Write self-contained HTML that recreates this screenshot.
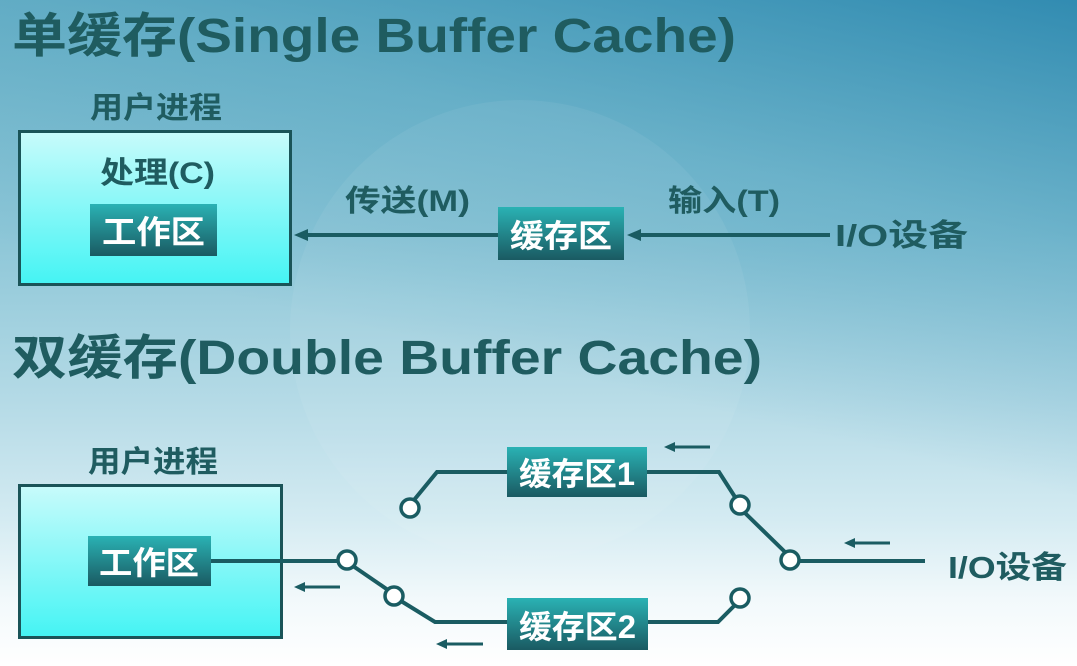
<!DOCTYPE html>
<html><head><meta charset="utf-8"><style>
html,body{margin:0;padding:0;width:1077px;height:666px;overflow:hidden}
svg{display:block}
text{font-family:"Liberation Sans","Noto Sans CJK SC",sans-serif;font-weight:bold}
</style></head><body>
<svg width="1077" height="666" viewBox="0 0 1077 666" xmlns="http://www.w3.org/2000/svg">
<defs>
<linearGradient id="bg" x1="0" y1="0" x2="0" y2="1">
<stop offset="0" stop-color="#78bacd"/>
<stop offset="0.35" stop-color="#8cc6d7"/>
<stop offset="0.6" stop-color="#b4dae6"/>
<stop offset="0.78" stop-color="#d4ebf2"/>
<stop offset="0.9" stop-color="#f2f9fb"/>
<stop offset="1" stop-color="#ffffff"/>
</linearGradient>
<linearGradient id="bgr" x1="1" y1="0" x2="0.75" y2="0.65">
<stop offset="0" stop-color="#1a7ca8" stop-opacity="0.75"/>
<stop offset="0.5" stop-color="#2a8ab0" stop-opacity="0.3"/>
<stop offset="1" stop-color="#2a8ab0" stop-opacity="0"/>
</linearGradient>
<linearGradient id="cy" x1="0" y1="0" x2="0" y2="1">
<stop offset="0" stop-color="#c8fbfb"/>
<stop offset="1" stop-color="#44f4f4"/>
</linearGradient>
<linearGradient id="dk" x1="0" y1="0" x2="0" y2="1">
<stop offset="0" stop-color="#2ab2b4"/>
<stop offset="1" stop-color="#1a5a62"/>
</linearGradient>
</defs>
<rect width="1077" height="666" fill="url(#bg)"/>
<rect width="1077" height="666" fill="url(#bgr)"/>
<circle cx="520" cy="330" r="230" fill="#ffffff" opacity="0.06"/>

<g fill="#1f5c60">
<text x="12" y="52" font-size="48" textLength="724" lengthAdjust="spacingAndGlyphs">单缓存(Single Buffer Cache)</text>
<text x="12" y="374" font-size="48" textLength="750" lengthAdjust="spacingAndGlyphs">双缓存(Double Buffer Cache)</text>
<text x="90" y="118" font-size="30" textLength="132" lengthAdjust="spacingAndGlyphs">用户进程</text>
<text x="88" y="472" font-size="30" textLength="130" lengthAdjust="spacingAndGlyphs">用户进程</text>
<text x="345" y="211" font-size="30" textLength="125" lengthAdjust="spacingAndGlyphs">传送(M)</text>
<text x="668" y="211" font-size="30" textLength="112" lengthAdjust="spacingAndGlyphs">输入(T)</text>
<text x="835" y="246" font-size="31" textLength="133" lengthAdjust="spacingAndGlyphs">I/O设备</text>
<text x="948" y="578" font-size="31" textLength="119" lengthAdjust="spacingAndGlyphs">I/O设备</text>
</g>

<rect x="19.5" y="131.5" width="271" height="153" fill="url(#cy)" stroke="#1a5458" stroke-width="3"/>
<text x="100" y="183" font-size="30" fill="#1f5c60" textLength="115" lengthAdjust="spacingAndGlyphs">处理(C)</text>
<rect x="19.5" y="485.5" width="262" height="152" fill="url(#cy)" stroke="#1a5458" stroke-width="3"/>

<g fill="url(#dk)">
<rect x="90" y="204" width="127" height="52"/>
<rect x="498" y="207" width="126" height="53"/>
<rect x="88" y="536" width="123" height="50"/>
<rect x="507" y="447" width="140" height="50"/>
<rect x="507" y="598" width="141" height="52"/>
</g>
<g fill="#ffffff" font-size="32">
<text x="102" y="243" textLength="103" lengthAdjust="spacingAndGlyphs">工作区</text>
<text x="510" y="247" textLength="102" lengthAdjust="spacingAndGlyphs">缓存区</text>
<text x="99" y="574" textLength="100" lengthAdjust="spacingAndGlyphs">工作区</text>
<text x="519" y="485" textLength="116" lengthAdjust="spacingAndGlyphs">缓存区1</text>
<text x="519" y="638" textLength="117" lengthAdjust="spacingAndGlyphs">缓存区2</text>
</g>

<g stroke="#1a5c62" stroke-width="4" fill="none">
<line x1="303" y1="235" x2="498" y2="235"/>
<line x1="636" y1="235" x2="830" y2="235"/>
<line x1="211" y1="561" x2="339" y2="561"/>
<line x1="353" y1="566" x2="388" y2="590"/>
<polyline points="401,601 435,622 507,622"/>
<polyline points="648,622 718,622 734,606"/>
<polyline points="414,500 437,472 507,472"/>
<polyline points="647,472 719,472 735,497"/>
<line x1="745" y1="513" x2="785" y2="552"/>
<line x1="799" y1="561" x2="925" y2="561"/>
<line x1="297" y1="587" x2="340" y2="587" stroke-width="3"/>
<line x1="439" y1="644" x2="483" y2="644" stroke-width="3"/>
<line x1="667" y1="447" x2="710" y2="447" stroke-width="3"/>
<line x1="847" y1="543" x2="890" y2="543" stroke-width="3"/>
</g>
<g fill="#1a5c62">
<polygon points="294,235 308,229 308,241"/>
<polygon points="627,235 641,229 641,241"/>
<polygon points="294,587 305,582 305,592"/>
<polygon points="436,644 447,639 447,649"/>
<polygon points="664,447 675,442 675,452"/>
<polygon points="844,543 855,538 855,548"/>
</g>
<g stroke="#1a5c62" stroke-width="3.5" fill="#ffffff">
<circle cx="347" cy="560" r="9"/>
<circle cx="394" cy="596" r="9"/>
<circle cx="410" cy="508" r="9"/>
<circle cx="740" cy="505" r="9"/>
<circle cx="790" cy="560" r="9"/>
<circle cx="740" cy="598" r="9"/>
</g>
</svg>
</body></html>
